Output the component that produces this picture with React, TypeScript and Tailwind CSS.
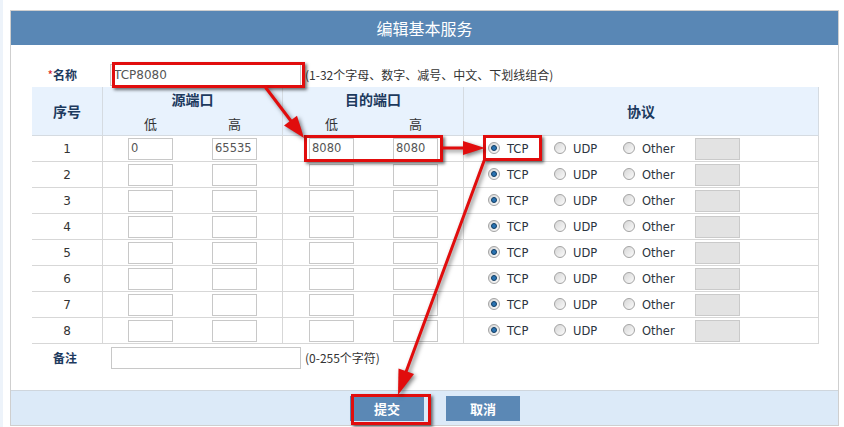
import React from "react";

const rows = [1, 2, 3, 4, 5, 6, 7, 8];

function Radio({ checked }: { checked?: boolean }) {
  return (
    <span className="relative top-[-1px] w-[12px] h-[12px] rounded-full border border-[#a3a3a3] bg-[linear-gradient(135deg,#d6d6d6,#fbfbfb)] flex items-center justify-center shrink-0">
      {checked && (
        <span className="w-[6px] h-[6px] rounded-full bg-[#2a74b3] border border-[#123d63]" />
      )}
    </span>
  );
}

function PortInput({ value }: { value?: string }) {
  return (
    <div className="w-[45px] h-[22px] border border-[#c8c8c8] bg-white text-[11.5px] text-[#555] pl-[2px] flex items-center">
      {value}
    </div>
  );
}

function RedBox({ className }: { className: string }) {
  return (
    <div
      className={
        "absolute border-[3px] border-[#e10d0d] shadow-[2px_2px_3px_rgba(0,0,0,0.55)] pointer-events-none " +
        className
      }
    />
  );
}

export default function App() {
  return (
    <div className="relative w-[844px] h-[427px] bg-white border-l-[3px] border-[#edf3fa] pl-[7px] pt-[10px] font-['DejaVu_Sans','Noto_Sans_CJK_SC',sans-serif] text-[#333]">
      {/* PANEL */}
      <div className="w-[829px] h-[416px] border border-[#cfcfcf] flex flex-col">
        {/* HEADER */}
        <div className="h-[34px] bg-[#5987b5] text-white text-[16px] flex items-center justify-center font-['Noto_Sans_CJK_SC',sans-serif]">
          编辑基本服务
        </div>

        {/* BODY */}
        <div className="flex-1 pl-[21px] pt-[18px]">
          {/* NAME */}
          <div className="h-[24px] flex items-center">
            <div className="w-[45px] text-right text-[12px] font-['Noto_Sans_CJK_SC',sans-serif]">
              <span className="text-[#d22]">*</span>
              <span className="font-bold text-[#1d3a5e]">名称</span>
            </div>
            <div className="ml-[33px] w-[191px] h-[22px] border border-[#c8c8c8] text-[12px] text-[#555] pl-[3px] flex items-center">
              TCP8080
            </div>
            <span className="ml-[4px] text-[12px] font-['Noto_Sans_CJK_SC',sans-serif]">
              (1-32个字母、数字、减号、中文、下划线组合)
            </span>
          </div>

          {/* TABLE */}
          <div className="w-[787px]">
            <div className="flex h-[49px] bg-[#e8f2fd] border-b border-[#d5dbe1] text-[#1d3a5e] font-['Noto_Sans_CJK_SC',sans-serif]">
              <div className="w-[71px] border-r border-[#d5dbe1] flex items-center justify-center text-[14px] font-bold">
                序号
              </div>
              {["源端口", "目的端口"].map((label, i) => (
                <div
                  key={label}
                  className={
                    "border-r border-[#d5dbe1] flex flex-col " +
                    (i === 0 ? "w-[180px]" : "w-[181px]")
                  }
                >
                  <div className="h-[25px] flex items-center justify-center text-[14px] font-bold">
                    {label}
                  </div>
                  <div
                    className={
                      "h-[23px] flex items-center gap-[39px] text-[13px] text-[#333] " +
                      (i === 0 ? "pl-[25px]" : "pl-[26px]")
                    }
                  >
                    <span className="w-[45px] text-center">低</span>
                    <span className="w-[45px] text-center">高</span>
                  </div>
                </div>
              ))}
              <div className="w-[355px] border-r border-[#d5dbe1] flex items-center justify-center text-[14px] font-bold">
                协议
              </div>
            </div>

            {rows.map((n) => (
              <div key={n} className="flex h-[26px] border-b border-[#d7d7d7] text-[12px]">
                <div className="w-[71px] border-r border-[#d7d7d7] flex items-center justify-center">
                  {n}
                </div>
                <div className="w-[180px] border-r border-[#d7d7d7] flex items-center pl-[25px] gap-[39px]">
                  <PortInput value={n === 1 ? "0" : undefined} />
                  <PortInput value={n === 1 ? "65535" : undefined} />
                </div>
                <div className="w-[181px] border-r border-[#d7d7d7] flex items-center pl-[26px] gap-[39px]">
                  <PortInput value={n === 1 ? "8080" : undefined} />
                  <PortInput value={n === 1 ? "8080" : undefined} />
                </div>
                <div className="w-[355px] border-r border-[#d7d7d7] flex items-center pl-[24px] text-[11.5px] text-[#2b3440]">
                  <div className="w-[66px] flex items-center gap-[7px]">
                    <Radio checked />
                    <span className="relative top-[1px]">TCP</span>
                  </div>
                  <div className="w-[69px] flex items-center gap-[7px]">
                    <Radio />
                    <span className="relative top-[1px]">UDP</span>
                  </div>
                  <div className="w-[72px] flex items-center gap-[7px]">
                    <Radio />
                    <span className="relative top-[1px]">Other</span>
                  </div>
                  <div className="w-[45px] h-[22px] bg-[#e3e3e3] border border-[#cacaca]" />
                </div>
              </div>
            ))}
          </div>

          {/* REMARK */}
          <div className="mt-[3px] h-[22px] flex items-center">
            <div className="w-[45px] text-right text-[12px] font-bold text-[#1d3a5e] font-['Noto_Sans_CJK_SC',sans-serif]">
              备注
            </div>
            <div className="ml-[34px] w-[190px] h-[22px] border border-[#c8c8c8]" />
            <span className="ml-[4px] text-[12px] font-['Noto_Sans_CJK_SC',sans-serif]">
              (0-255个字符)
            </span>
          </div>
        </div>

        {/* FOOTER */}
        <div className="h-[35px] border-t border-[#cfd6dd] bg-[#dceaf8] flex items-start pt-[5px] pl-[339px] gap-[22px] font-['Noto_Sans_CJK_SC',sans-serif]">
          <button className="w-[74px] h-[25px] bg-[#5b88b5] text-white text-[13px] font-bold">
            提交
          </button>
          <button className="w-[74px] h-[25px] bg-[#5b88b5] text-white text-[13px] font-bold">
            取消
          </button>
        </div>
      </div>

      {/* ANNOTATIONS */}
      <RedBox className="left-[109px] top-[62px] w-[193px] h-[26px]" />
      <RedBox className="left-[301px] top-[135px] w-[139px] h-[27px]" />
      <RedBox className="left-[480px] top-[135px] w-[59px] h-[26px]" />
      <RedBox className="left-[348px] top-[394px] w-[80px] h-[31px]" />

      <svg
        className="absolute left-0 top-0 pointer-events-none"
        width="844"
        height="427"
        viewBox="0 0 844 427"
        style={{ filter: "drop-shadow(2px 2px 2px rgba(0,0,0,0.5))" }}
      >
        <g stroke="#e10d0d" strokeWidth="3" fill="#e10d0d" strokeLinecap="round">
          <line x1="263" y1="88" x2="288" y2="121" />
          <polygon points="301,138 281,125.5 294,115.7" stroke="none" />
          <line x1="440" y1="148" x2="461" y2="148" />
          <polygon points="482,148 460,141 460,155" stroke="none" />
          <line x1="481" y1="161" x2="403" y2="372" />
          <polygon points="395,395 395.5,368.5 411,374" stroke="none" />
        </g>
      </svg>
    </div>
  );
}
